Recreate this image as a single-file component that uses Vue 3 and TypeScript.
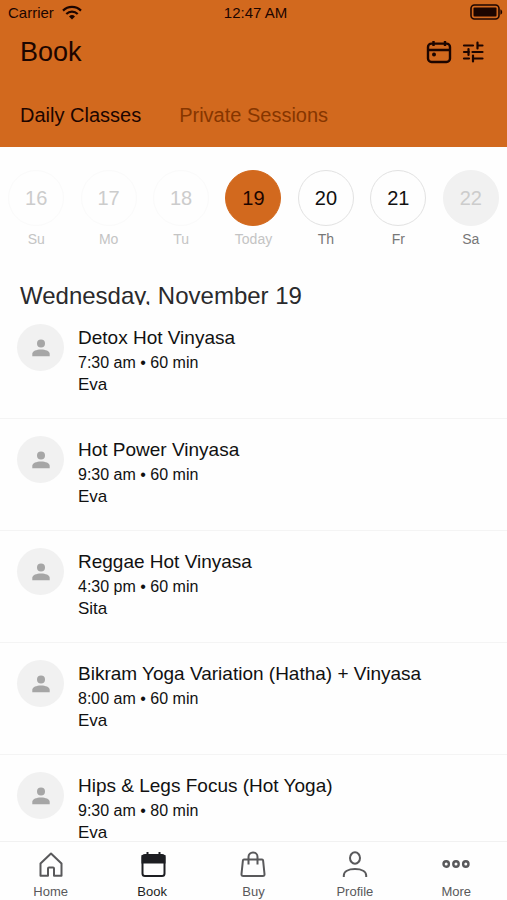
<script setup lang="ts">
import { ref } from 'vue'

type DayState = 'past' | 'open' | 'closed'

interface Day {
  date: number
  label: string
  state: DayState
}

interface YogaClass {
  id: number
  name: string
  time: string
  minutes: number
  teacher: string
}

type NavIcon = 'home' | 'book' | 'buy' | 'profile' | 'more'

const tabs = ['Daily Classes', 'Private Sessions']
const activeTab = ref(tabs[0])

const days: Day[] = [
  { date: 16, label: 'Su', state: 'past' },
  { date: 17, label: 'Mo', state: 'past' },
  { date: 18, label: 'Tu', state: 'past' },
  { date: 19, label: 'Today', state: 'open' },
  { date: 20, label: 'Th', state: 'open' },
  { date: 21, label: 'Fr', state: 'open' },
  { date: 22, label: 'Sa', state: 'closed' },
]
const selectedDate = ref(19)

const classes: YogaClass[] = [
  { id: 1, name: 'Detox Hot Vinyasa', time: '7:30 am', minutes: 60, teacher: 'Eva' },
  { id: 2, name: 'Hot Power Vinyasa', time: '9:30 am', minutes: 60, teacher: 'Eva' },
  { id: 3, name: 'Reggae Hot Vinyasa', time: '4:30 pm', minutes: 60, teacher: 'Sita' },
  { id: 4, name: 'Bikram Yoga Variation (Hatha) + Vinyasa', time: '8:00 am', minutes: 60, teacher: 'Eva' },
  { id: 5, name: 'Hips & Legs Focus (Hot Yoga)', time: '9:30 am', minutes: 80, teacher: 'Eva' },
]

const navItems: { icon: NavIcon; label: string }[] = [
  { icon: 'home', label: 'Home' },
  { icon: 'book', label: 'Book' },
  { icon: 'buy', label: 'Buy' },
  { icon: 'profile', label: 'Profile' },
  { icon: 'more', label: 'More' },
]
const activeNav = ref<NavIcon>('book')
</script>

<template>
  <div class="app">
    <header class="header">
      <div class="status">
        <div class="carrier">
          <span>Carrier</span>
          <svg width="20" height="15" viewBox="0 0 20 15" aria-hidden="true">
            <g fill="none" stroke="currentColor" stroke-width="2.2">
              <path d="M1 5.6a12.8 12.8 0 0 1 18 0" />
              <path d="M4.3 9a8.2 8.2 0 0 1 11.4 0" />
            </g>
            <path d="M10 14.4l-3-3a4.3 4.3 0 0 1 6 0z" fill="currentColor" />
          </svg>
        </div>
        <time class="clock">12:47 AM</time>
        <svg class="battery" width="33" height="16" viewBox="0 0 33 16" aria-hidden="true">
          <rect x="1" y="1" width="28" height="14" rx="3.5" fill="none" stroke="currentColor" stroke-width="1.6" />
          <rect x="3.5" y="3.4" width="23" height="9.2" rx="1" fill="currentColor" />
          <path d="M30.4 5.2c2.4 1 2.4 4.6 0 5.600z" fill="currentColor" />
        </svg>
      </div>

      <div class="title-bar">
        <h1>Book</h1>
        <div class="actions">
          <button type="button" aria-label="Choose a date">
            <svg width="26" height="24" viewBox="0 0 26 24" aria-hidden="true">
              <g fill="none" stroke="currentColor" stroke-width="2.4">
                <rect x="2" y="3.6" width="22" height="18.4" rx="3.5" />
                <path d="M2 10h22M7.500 1v5M19 1v5" />
              </g>
              <circle cx="8" cy="14.400" r="2" fill="currentColor" />
            </svg>
          </button>
          <button type="button" aria-label="Filter classes">
            <svg width="22" height="22" viewBox="0 0 22 22" aria-hidden="true">
              <path
                d="M2 4.500h9M15.500 4.500H20.500M15.500 1.500v6M2 11h5M6.500 8v6M10.500 11H20.500M2 17.500h5M11 14.500v6M11 17.500h9.500"
                fill="none"
                stroke="currentColor"
                stroke-width="2.2"
                stroke-linecap="round"
              />
            </svg>
          </button>
        </div>
      </div>

      <nav class="tabs" aria-label="Booking type">
        <button
          v-for="tab in tabs"
          :key="tab"
          type="button"
          :class="{ active: tab === activeTab }"
          @click="activeTab = tab"
        >
          {{ tab }}
        </button>
      </nav>
    </header>

    <main class="content">
      <div class="days">
        <button
          v-for="day in days"
          :key="day.date"
          type="button"
          class="day"
          :class="[day.state, { selected: day.date === selectedDate }]"
          @click="selectedDate = day.date"
        >
          <span class="circle">{{ day.date }}</span>
          <span class="weekday">{{ day.label }}</span>
        </button>
      </div>

      <h2>Wednesday, November 19</h2>

      <ul class="classes">
        <li v-for="item in classes" :key="item.id">
          <span class="avatar">
            <svg width="18" height="18" viewBox="0 0 18 18" aria-hidden="true">
              <circle cx="9" cy="4.500" r="4" fill="currentColor" />
              <path d="M0.300 17.200v-2.400C0.300 11.900 4.500 10.400 9 10.400s8.700 1.500 8.700 4.400v2.400z" fill="currentColor" />
            </svg>
          </span>
          <div class="info">
            <h3>{{ item.name }}</h3>
            <p class="when">{{ item.time }} • {{ item.minutes }} min</p>
            <p class="teacher">{{ item.teacher }}</p>
          </div>
        </li>
      </ul>
    </main>

    <nav class="bottom-nav" aria-label="Main">
      <a
        v-for="item in navItems"
        :key="item.icon"
        :href="'#' + item.icon"
        :class="{ active: item.icon === activeNav }"
        @click="activeNav = item.icon"
      >
        <svg width="28" height="28" viewBox="0 0 28 28" fill="none" stroke="currentColor" stroke-width="2" aria-hidden="true">
          <path v-if="item.icon === 'home'" d="M3.500 12.500L14 2.500l10.500 10v12.300H17v-7.300q0-1-1-1h-4q-1 0-1 1v7.300H3.500z" stroke-linejoin="round" />
          <template v-else-if="item.icon === 'book'">
            <rect x="4.500" y="4" width="22" height="21" rx="2.500" />
            <path d="M4.500 5h22v6.500h-22z" fill="currentColor" />
            <path d="M9.500 1v4M21.500 1v4" />
          </template>
          <template v-else-if="item.icon === 'buy'">
            <path d="M5 8.500h18q1 0 1.100 1l1.400 13.500q.2 2-1.800 2H4.300q-2 0-1.800-2L3.900 9.500q.1-1 1.100-1z" stroke-linejoin="round" />
            <path d="M9.500 13.500V6a4.500 4.500 0 0 1 9 0v7.500" />
          </template>
          <template v-else-if="item.icon === 'profile'">
            <ellipse cx="14" cy="7" rx="5" ry="5.700" />
            <path d="M2.800 26v-1.500c0-4 4.500-6.500 11.200-6.500s11.200 2.500 11.200 6.500V26" />
          </template>
          <template v-else>
            <circle cx="4.200" cy="13" r="2.700" stroke-width="2.400" />
            <circle cx="14" cy="13" r="2.700" stroke-width="2.400" />
            <circle cx="23.800" cy="13" r="2.700" stroke-width="2.400" />
          </template>
        </svg>
        <span>{{ item.label }}</span>
      </a>
    </nav>
  </div>
</template>

<style>
body {
  margin: 0;
  background: #fff;
}
</style>

<style scoped>
.app {
  display: flex;
  flex-direction: column;
  height: 100vh;
  background: #fefefe;
  color: #111;
  font-family: "Liberation Sans", Arial, sans-serif;
}

button {
  padding: 0;
  border: 0;
  background: none;
  color: inherit;
  font: inherit;
  cursor: pointer;
}

svg {
  display: block;
}

h1,
h2,
h3,
p {
  margin: 0;
  font-weight: 400;
}

.header {
  flex: none;
  background: #d2691e;
  color: #1c0500;
}

.status {
  display: grid;
  grid-template-columns: 1fr auto 1fr;
  align-items: center;
  height: 24px;
  padding: 0 4px 0 8px;
  font-size: 15px;
}

.carrier {
  display: flex;
  align-items: center;
  gap: 8px;
}

.battery {
  justify-self: end;
}

.title-bar {
  display: flex;
  align-items: center;
  justify-content: space-between;
  height: 56px;
  padding: 0 23px 0 20px;
}

h1 {
  font-size: 27px;
  line-height: 32px;
}

.actions {
  display: flex;
  align-items: center;
  gap: 10px;
}

.tabs {
  display: flex;
  gap: 38px;
  height: 67px;
  padding: 0 20px;
  font-size: 20px;
}

.tabs button {
  padding-top: 4px;
  color: #863600;
}

.tabs .active {
  color: #1c0500;
}

.content {
  flex: 1;
  min-height: 0;
  overflow-y: auto;
  scrollbar-width: none;
}

.days {
  display: grid;
  grid-template-columns: repeat(7, 1fr);
  padding-top: 23px;
}

.day {
  display: flex;
  flex-direction: column;
  align-items: center;
  gap: 4px;
}

.circle {
  box-sizing: border-box;
  display: grid;
  place-items: center;
  width: 56px;
  height: 56px;
  border: 1px solid #e2e2e2;
  border-radius: 50%;
  font-size: 20px;
}

.weekday {
  color: #777;
  font-size: 14px;
  line-height: 18px;
}

.past .circle {
  border-color: #fafafa;
  color: #ccc;
}

.past .weekday,
.selected .weekday {
  color: #c4c4c4;
}

.closed .circle {
  border-color: #f1f1f1;
  background: #f1f1f1;
  color: #ccc;
}

.selected .circle {
  border-color: #d2691e;
  background: #d2691e;
  color: #1c0500;
}

h2 {
  height: 23px;
  margin: 34px 0 2px;
  padding: 0 20px;
  overflow: hidden;
  color: #2a2a2c;
  font-size: 24px;
  line-height: 28px;
}

.classes {
  margin: 0;
  padding: 0;
  list-style: none;
}

.classes li {
  box-sizing: border-box;
  display: flex;
  align-items: flex-start;
  gap: 14px;
  min-height: 112px;
  padding: 17px 17px;
  border-bottom: 1px solid #f4f4f4;
}

.avatar {
  flex: none;
  display: grid;
  place-items: center;
  width: 47px;
  height: 47px;
  border-radius: 50%;
  background: #f1f1f1;
  color: #a6a6a6;
}

h3 {
  font-size: 19px;
  line-height: 28px;
}

.when {
  font-size: 16px;
  line-height: 22px;
}

.teacher {
  font-size: 17px;
  line-height: 22px;
}

.bottom-nav {
  flex: none;
  display: grid;
  grid-template-columns: repeat(5, 1fr);
  height: 59px;
  box-sizing: border-box;
  border-top: 1px solid #f1f1f1;
  background: #fefefe;
}

.bottom-nav a {
  display: flex;
  flex-direction: column;
  align-items: center;
  gap: 5px;
  padding-top: 9px;
  color: #59595b;
  font-size: 13px;
  line-height: 16px;
  text-decoration: none;
}

.bottom-nav .active {
  color: #1d1e22;
}
</style>
